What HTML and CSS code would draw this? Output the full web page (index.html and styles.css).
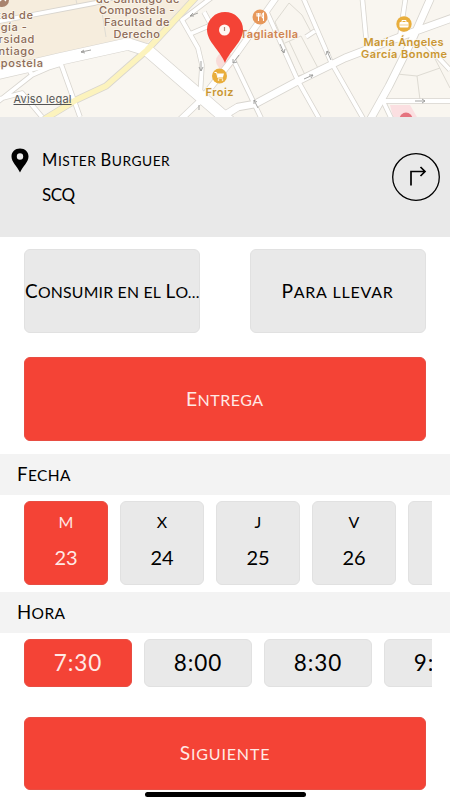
FILE: index.html
```html
<!DOCTYPE html>
<html lang="es">
<head>
<meta charset="utf-8">
<title>Mister Burguer</title>
<link rel="stylesheet" href="styles.css">
</head>
<body>
<main class="app">
  <section class="map">
    <svg width="450" height="117" viewBox="0 0 450 117">
      <rect width="450" height="117" fill="#f9f6f0"/>
      <path d="M0 0H192L147 43L130 40L0 69Z" fill="#f6eddd"/>
      <path d="M390 105H410L417 117H393Z" fill="#fbdfe1"/>
      <circle cx="225" cy="61" r="9" fill="#f9ccca" opacity=".6"/>
      <g class="paths">
        <path d="M100 0L106 37M76 0L78 8M275 22L289 3L302 15L311 32M275 22L298 76M285 43L301 36L319 70M289 41L305 75M298 76L319 70"/>
        <path d="M397 74L417 76L440 68M417 76L420 100M432 53L450 88"/>
      </g>
      <g class="road edge">
        <path class="w4" d="M-5 22L95 3L115-3M215-5L182 20L198 48L202 65L200 97M204 12L211 25L190 34M-5 104L32 75L48 68L61 64L80 117M-5 100L22 93L42 117M32 75L28 68"/>
        <path class="w6" d="M278-5L232 60L200 101L180 120"/>
        <path class="w4" d="M232 57L262 120M266 10L298 81L320 120M302-5L331 62L364 120M362-5L366 38M406-5L399 42M383 101H455M383 101L392 120M306 37L315 31M423 41L450 70M200 98L225 120"/>
        <path class="w7" d="M220 118L238 107L255 104L298 81L345 58L405 35L455 17M432-5L413 38L389 86L370 120"/>
        <path class="w11" d="M-5 74L60 59L128 44L147 50L230 122"/>
        <path class="w6" d="M198-5L147 50L106 86L76 100L43 120"/>
      </g>
      <g class="road fill">
        <path class="w4" d="M-5 22L95 3L115-3M215-5L182 20L198 48L202 65L200 97M204 12L211 25L190 34M-5 104L32 75L48 68L61 64L80 117M-5 100L22 93L42 117M32 75L28 68"/>
        <path class="w6" d="M278-5L232 60L200 101L180 120"/>
        <path class="w4" d="M232 57L262 120M266 10L298 81L320 120M302-5L331 62L364 120M362-5L366 38M406-5L399 42M383 101H455M383 101L392 120M306 37L315 31M423 41L450 70M200 98L225 120"/>
        <path class="w7" d="M220 118L238 107L255 104L298 81L345 58L405 35L455 17M432-5L413 38L389 86L370 120"/>
        <path class="w11" d="M-5 74L60 59L128 44L147 50L230 122"/>
        <path class="w6 yellow" d="M198-5L147 50L106 86L76 100L43 120"/>
      </g>
      <g class="arrows">
        <path d="M91 50L81 52M84 50L81 52L85 53M198 13L190 16M193 13L190 16L194 16M201 61V71M199 67L201 71L203 67M239 55L233 63M233 59L233 63L237 62M280 44L284 53M281 50L284 53L285 49M331 60L327 51M326 55L327 51L330 53M304 79L313 75M309 75L313 75L311 78M258 108L254 100M254 104L254 100L257 102M415 101H425M422 99L425 101L422 103M199 110V105"/>
      </g>
      <g class="campus" text-anchor="middle">
        <text x="138" y="2.500" textLength="84">de Santiago de</text>
        <text x="137" y="14" textLength="76">Compostela -</text>
        <text x="137" y="26" textLength="66">Facultad de</text>
        <text x="137" y="38" textLength="47">Derecho</text>
      </g>
      <g class="campus" text-anchor="end">
        <text x="33.500" y="19">ltad de</text>
        <text x="27.500" y="31">logía -</text>
        <text x="35" y="43">ersidad</text>
        <text x="35" y="55">antiago</text>
        <text x="43.500" y="67">mpostela</text>
      </g>
      <circle cx="2" cy="0" r="7" fill="#a9846e"/>
      <path d="M0 1L3-2L6 1" fill="none" stroke="#fff" stroke-width="1.200"/>
      <circle cx="260" cy="17" r="7.500" fill="#e7985b"/>
      <path d="M257 13V16H260V13M258.500 13V21M263.500 21V13C261.500 14 261.500 17 263 18" fill="none" stroke="#fff" stroke-width="1.100"/>
      <text class="label food" x="240" y="37.500" textLength="58">Tagliatella</text>
      <circle cx="404" cy="24" r="7.700" fill="#e9ae3c"/>
      <path d="M402 22V20.500H406V22" fill="none" stroke="#fff"/>
      <rect x="399.500" y="22" width="9" height="5.500" rx="1" fill="#fff"/>
      <path d="M400 25H408" stroke="#e9ae3c" stroke-width=".6"/>
      <text class="label shop" x="363.500" y="46" textLength="80">María Ángeles</text>
      <text class="label shop" x="361" y="58" textLength="86">García Bonome</text>
      <circle cx="219.500" cy="76" r="7.500" fill="#e9ae3c"/>
      <path d="M214.500 72.500H216.500L218 78H223" fill="none" stroke="#fff"/>
      <path d="M217 73.500H224L223 77H218Z" fill="#fff"/>
      <circle cx="218.500" cy="80" r=".8" fill="#fff"/><circle cx="222.500" cy="80" r=".8" fill="#fff"/>
      <text class="label shop" x="205.500" y="96" textLength="28">Froiz</text>
      <circle cx="406" cy="119" r="6.500" fill="#e5737f"/>
      <path d="M225 63C220 50 207 42 207 29.500A18 17.500 0 0 1 243 29.500C243 42 230 50 225 63Z" fill="#f44336"/>
      <circle cx="224.500" cy="30" r="5.500" fill="#fff7f2"/>
      <path d="M224.500 27V31" stroke="#a9887a" stroke-width="1.200"/>
      <text class="legal" x="13.500" y="102.500" textLength="58">Aviso legal</text>
      <path d="M13.500 104.500H71.500" stroke="#555" stroke-width="1"/>
    </svg>
  </section>

  <section class="place">
    <svg class="marker" width="18" height="25" viewBox="0 0 18 25"><path fill-rule="evenodd" d="M9 0.500C4 .5.500 4 .5 8.500C.5 14 6 18 9 24.500C12 18 17.500 14 17.500 8.500C17.500 4 14 .5 9 .5ZM9 5.300A3.200 3.200 0 1 1 9 11.700A3.200 3.200 0 0 1 9 5.300Z"/></svg>
    <div class="address">
      <p class="name caps"><span class="word">Mister</span> <span class="word">Burguer</span></p>
      <p class="city">SCQ</p>
    </div>
    <svg class="route" width="48" height="48" viewBox="0 0 48 48" fill="none" stroke="#000"><circle cx="24" cy="24" r="23.300" stroke-width="1.300"/><path d="M19 32.500V18.500H33M28.500 14L33 18.500L28.500 23" stroke-width="1.700"/></svg>
  </section>

  <section class="modes">
    <button class="tile local caps"><span class="word">Consumir</span> <span>en</span> <span>el</span> <span class="word">Lo...</span></button>
    <button class="tile takeaway caps"><span class="word">Para</span> <span>llevar</span></button>
    <button class="tile active delivery caps"><span class="word">Entrega</span></button>
  </section>

  <h2 class="heading fecha caps"><span class="word">Fecha</span></h2>
  <section class="strip days">
    <button class="tile day active"><span>M</span><b>23</b></button>
    <button class="tile day"><span>X</span><b>24</b></button>
    <button class="tile day"><span>J</span><b>25</b></button>
    <button class="tile day"><span>V</span><b>26</b></button>
    <button class="tile day"></button>
  </section>

  <h2 class="heading hora caps"><span class="word">Hora</span></h2>
  <section class="strip hours">
    <button class="tile hour active">7:30</button>
    <button class="tile hour">8:00</button>
    <button class="tile hour">8:30</button>
    <button class="tile hour">9:00</button>
  </section>

  <button class="tile active next caps"><span class="word">Siguiente</span></button>
  <div class="home"></div>
</main>
</body>
</html>
```
FILE: styles.css
```css
* { box-sizing: border-box; }
body { margin: 0; background: #fff; font-family: Lato, "Open Sans", sans-serif; color: #000; }
p, h2 { margin: 0; font-weight: 400; }
.app { width: 450px; height: 800px; overflow: hidden; display: flex; flex-direction: column; background: #fff; }

.map { height: 117px; flex: none; overflow: hidden; }
.map svg { display: block; }
.map text { font-family: Inter, Roboto, sans-serif; paint-order: stroke; stroke: #fbf7ef; stroke-width: 1.5px; }
.paths path { fill: none; stroke: #dedbd3; stroke-width: 1; }
.road path { fill: none; stroke-linejoin: round; }
.edge .w4 { stroke-width: 5.4; }
.edge .w6 { stroke-width: 7; }
.edge .w7 { stroke-width: 8.4; }
.edge .w11 { stroke-width: 13; }
.fill .w4 { stroke-width: 3.8; }
.fill .w6 { stroke-width: 5.6; }
.fill .w7 { stroke-width: 6.8; }
.fill .w11 { stroke-width: 11.6; }
.edge path { stroke: #d8d5cf; }
.fill path { stroke: #fff; }
.fill .yellow { stroke: #fcf3bd; }
.arrows path { fill: none; stroke: #9b9b99; stroke-width: .9; }
.campus text { font-size: 11px; font-weight: 500; fill: #8d6b57; letter-spacing: .6px; }
.label { font-size: 11px; font-weight: 600; }
.food { fill: #cf8350; }
.shop { fill: #c99632; }
.map .legal { font-size: 11px; fill: #555; stroke: none; }

.place { height: 120px; flex: none; display: flex; background: #e9e9e9; padding: 0 10px 0 11px; }
.marker { margin-top: 31px; }
.address { flex: 1; padding: 33px 0 0 13px; }
.name { line-height: 20px; height: 35px; font-size: 13.8px; letter-spacing: .5px; }
.city { line-height: 20px; font-size: 17px; letter-spacing: -.4px; }
.route { margin-top: 36px; }

.caps { text-transform: uppercase; white-space: nowrap; }
.caps span { display: inline-block; }
.word::first-letter { font-size: 1.2em; }

.tile { border: 1px solid #e1e1e1; border-radius: 6px; background: #e9e9e9; color: #000; font-family: inherit; padding: 0 0 2px; margin: 0; overflow: hidden; flex: none; }
.active { background: #f44336; border-color: #e84d42; color: #ffe9e5; }

.modes { display: grid; grid-template-columns: 176px 176px; justify-content: space-between; row-gap: 24px; padding: 12px 24.500px 0 24px; height: 217px; flex: none; grid-template-rows: 84px 84px; }
.modes .tile { font-size: 16px; }
.modes .local { font-size: 15.8px; letter-spacing: .22px; }
.takeaway { letter-spacing: .75px; }
.delivery { grid-column: 1 / -1; letter-spacing: .5px; }

.heading { height: 41px; flex: none; background: #f3f3f3; line-height: 41px; padding-left: 17px; font-size: 15.5px; letter-spacing: .4px; }

.strip { display: flex; margin: 0 18px 0 24px; padding-top: 6px; overflow: hidden; flex: none; }
.days { height: 97px; gap: 12px; }
.day { width: 84px; height: 84px; display: flex; flex-direction: column; align-items: center; justify-content: flex-start; }
.day span { font-size: 16px; line-height: 20px; margin-top: 10px; }
.day b { font-weight: 400; font-size: 20px; line-height: 24px; margin-top: 13px; }
.hours { height: 84px; gap: 12px; }
.hour { width: 108px; height: 48px; font-size: 22.5px; letter-spacing: .9px; }

.next { width: 402px; height: 73px; margin-left: 24px; font-size: 16px; letter-spacing: .85px; }
.home { width: 161px; height: 5px; margin: 2px 0 0 145px; border-radius: 3px; background: #000; flex: none; }
```
